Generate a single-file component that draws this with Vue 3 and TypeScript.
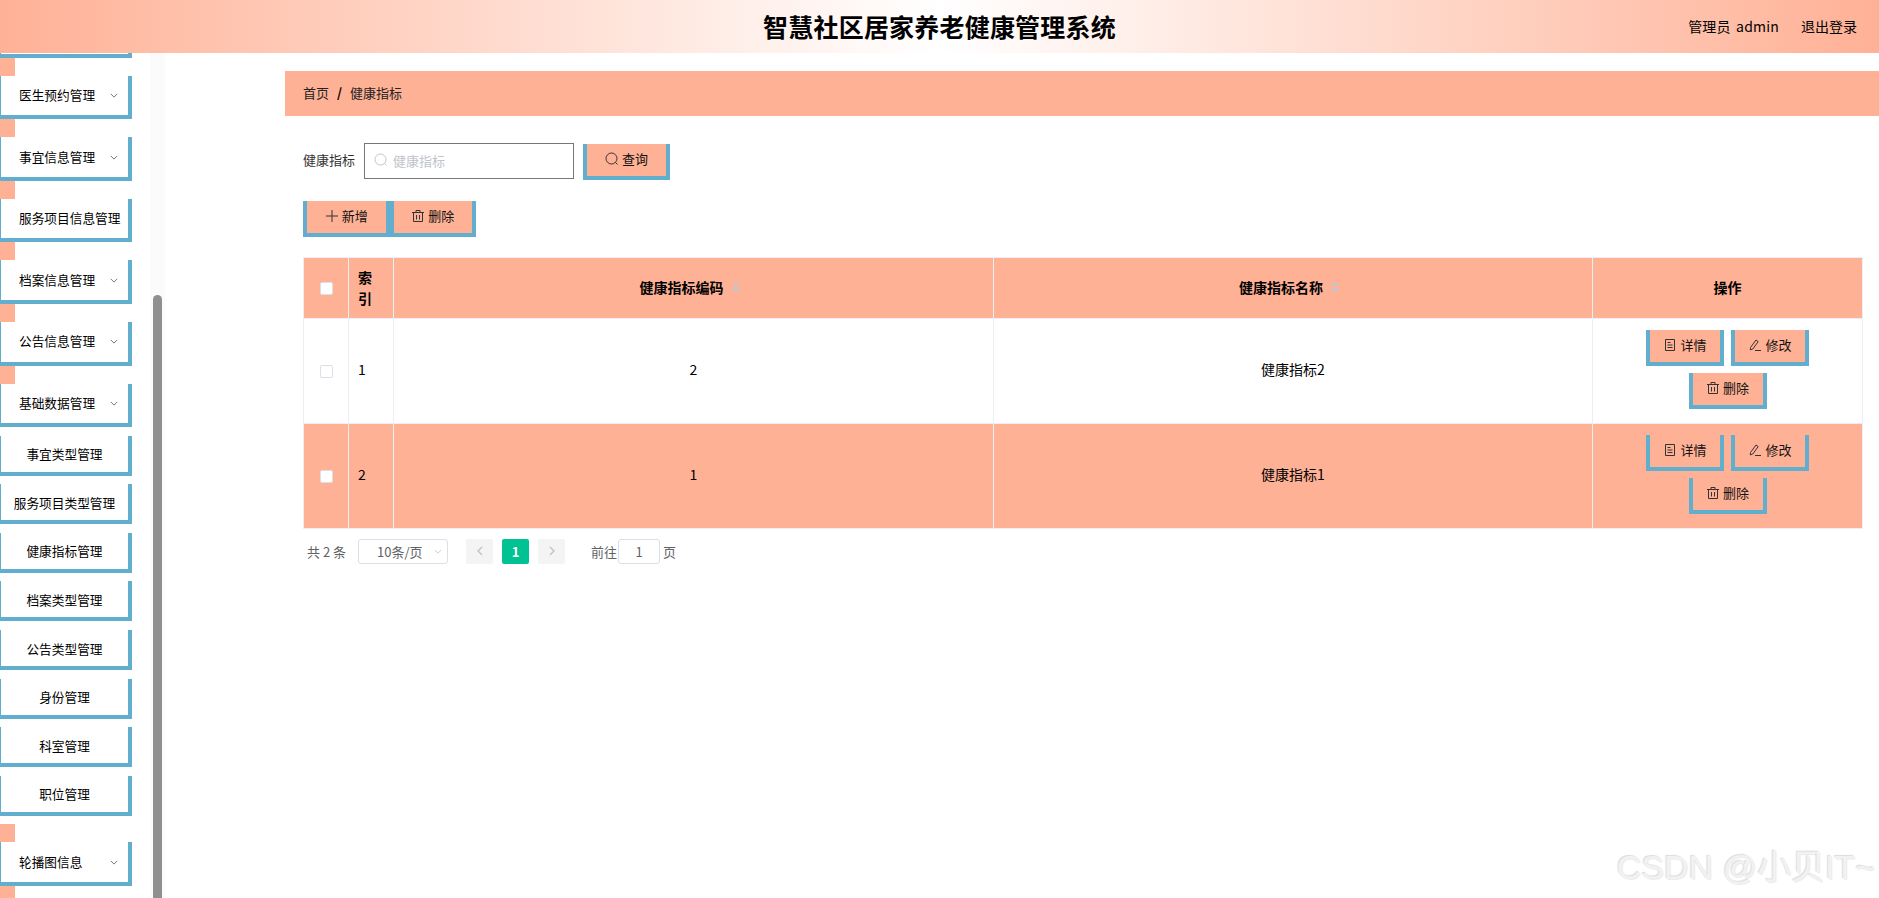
<script setup lang="ts">
interface MenuGroup {
  name: string
  arrow: boolean
  children?: string[]
}

interface Row {
  id: number
  code: string
  name: string
}

const menus: MenuGroup[] = [
  { name: '', arrow: false },
  { name: '医生预约管理', arrow: true },
  { name: '事宜信息管理', arrow: true },
  { name: '服务项目信息管理', arrow: false },
  { name: '档案信息管理', arrow: true },
  { name: '公告信息管理', arrow: true },
  {
    name: '基础数据管理',
    arrow: true,
    children: ['事宜类型管理', '服务项目类型管理', '健康指标管理', '档案类型管理', '公告类型管理', '身份管理', '科室管理', '职位管理'],
  },
  { name: '轮播图信息', arrow: true },
  { name: '', arrow: false },
]

const rows: Row[] = [
  { id: 1, code: '2', name: '健康指标2' },
  { id: 2, code: '1', name: '健康指标1' },
]
</script>

<template>
  <div class="page">
    <header class="topbar">
      <h1>智慧社区居家养老健康管理系统</h1>
      <div class="user">
        <span class="who">管理员 admin</span>
        <span>退出登录</span>
      </div>
    </header>

    <div class="body-wrap">
      <!-- 侧边栏 -->
      <aside class="sidebar">
        <nav class="menu">
          <div v-for="(m, i) in menus" :key="i" class="group" :class="{ open: m.children }">
            <i class="mark"></i>
            <div class="item">
              <span>{{ m.name }}</span>
              <svg v-if="m.arrow" class="arrow" viewBox="0 0 10 6"><path d="M1 1l4 4 4-4" /></svg>
            </div>
            <div v-for="c in m.children" :key="c" class="item sub">{{ c }}</div>
          </div>
        </nav>
        <div class="track"><div class="thumb"></div></div>
      </aside>

      <main class="content">
        <div class="crumb">
          <span>首页</span>
          <b>/</b>
          <span>健康指标</span>
        </div>

        <div class="inner">
          <div class="filter">
            <label>健康指标</label>
            <div class="search">
              <svg class="ico light" viewBox="0 0 14 14"><circle cx="6.5" cy="6.5" r="5.5" /><path d="M10.5 10.5l2 2" /></svg>
              <span>健康指标</span>
            </div>
            <button class="btn query">
              <svg class="ico" viewBox="0 0 14 14"><circle cx="6.5" cy="6.5" r="5.5" /><path d="M10.5 10.5l2 2" /></svg>
              查询
            </button>
          </div>

          <div class="actions">
            <button class="btn wide">
              <svg class="ico" viewBox="0 0 14 14"><path d="M7 1v12M1 7h12" /></svg>
              新增
            </button>
            <button class="btn wide">
              <svg class="ico" viewBox="0 0 14 14"><path d="M1 3.5h12M5 3.5V1.5h4v2M2.5 3.5v9h9v-9M5.5 6v4.5M8.5 6v4.5" /></svg>
              删除
            </button>
          </div>

          <table class="grid">
            <colgroup>
              <col style="width: 45px" />
              <col style="width: 45px" />
              <col style="width: 600px" />
              <col style="width: 599px" />
              <col style="width: 270px" />
            </colgroup>
            <thead>
              <tr>
                <th><i class="check"></i></th>
                <th class="left">索引</th>
                <th class="head"><span class="sortable">健康指标编码<i class="caret"></i></span></th>
                <th class="head"><span class="sortable">健康指标名称<i class="caret"></i></span></th>
                <th class="head">操作</th>
              </tr>
            </thead>
            <tbody>
              <tr v-for="r in rows" :key="r.id" :class="{ striped: r.id === 2 }">
                <td><i class="check"></i></td>
                <td class="left txt">{{ r.id }}</td>
                <td class="txt">{{ r.code }}</td>
                <td class="txt">{{ r.name }}</td>
                <td class="op-cell">
                  <div class="ops">
                    <button class="btn small">
                      <svg class="ico" viewBox="0 0 14 14"><path d="M2.5 1.5h9v11h-9zM4.5 4.5h3M4.5 7h5M4.5 9.5h5" /></svg>
                      详情
                    </button>
                    <button class="btn small">
                      <svg class="ico" viewBox="0 0 14 14"><path d="M2.5 9.5L8 2l2.2 1.6L4.8 11l-2.5.9zM7 12.5h6" /></svg>
                      修改
                    </button>
                    <button class="btn small">
                      <svg class="ico" viewBox="0 0 14 14"><path d="M1 3.5h12M5 3.5V1.5h4v2M2.5 3.5v9h9v-9M5.5 6v4.5M8.5 6v4.5" /></svg>
                      删除
                    </button>
                  </div>
                </td>
              </tr>
            </tbody>
          </table>

          <div class="pager">
            <span class="total">共 2 条</span>
            <div class="size">
              <span>10条/页</span>
              <svg viewBox="0 0 10 6"><path d="M1 1l4 4 4-4" /></svg>
            </div>
            <div class="pg nav"><svg viewBox="0 0 6 10"><path d="M5 1L1 5l4 4" /></svg></div>
            <div class="pg on">1</div>
            <div class="pg nav"><svg viewBox="0 0 6 10"><path d="M1 1l4 4-4 4" /></svg></div>
            <span class="goto">前往</span>
            <div class="jump">1</div>
            <span class="unit">页</span>
          </div>
        </div>
      </main>
    </div>

    <div class="watermark">CSDN @小贝IT~</div>
  </div>
</template>

<style>
html, body {
  margin: 0;
  overflow: hidden;
  background: #fff;
}
</style>

<style scoped>
.page {
  position: relative;
  height: 100vh;
  overflow: hidden;
  font-family: 'Noto Sans CJK SC', 'Noto Sans', sans-serif;
  font-size: 13px;
  color: #000;
}

.topbar {
  position: relative;
  height: 53px;
  display: flex;
  align-items: center;
  justify-content: center;
  background: linear-gradient(90deg, #ffb196 0%, #fff 50%, #ffb196 100%);
}

.topbar h1 {
  margin: 0;
  font-size: 25px;
  font-weight: 700;
  line-height: 53px;
  letter-spacing: 0.2px;
}

.user {
  position: absolute;
  right: 22px;
  top: 0;
  display: flex;
  gap: 22px;
  font-size: 14px;
  line-height: 53px;
}

.who {
  word-spacing: 2px;
  letter-spacing: 0.2px;
}

.body-wrap {
  display: flex;
  height: calc(100vh - 53px);
}

.sidebar {
  flex: 0 0 165px;
  display: flex;
  overflow: hidden;
}

.menu {
  flex: 0 0 132px;
  min-width: 0;
  margin-top: -56.75px;
  font-size: 12.7px;
}

.group.open {
  padding-bottom: 8.6px;
}

.mark {
  display: block;
  width: 15px;
  height: 18px;
  background: #ffb196;
}

.item {
  box-sizing: border-box;
  height: 43.55px;
  display: flex;
  align-items: center;
  justify-content: space-between;
  padding: 0 10px 2px 18px;
  border-left: 1px solid #61aecf;
  border-right: 4px solid #61aecf;
  border-bottom: 4px solid #61aecf;
  white-space: nowrap;
}

.item.sub {
  height: 40px;
  margin-top: 8.6px;
  padding: 0;
  justify-content: center;
}

.arrow {
  width: 8px;
  height: 5px;
  margin-top: 2px;
  fill: none;
  stroke: #555;
  stroke-width: 1;
}

.track {
  width: 15px;
  margin-left: 18px;
  padding: 242px 3px 0;
  box-sizing: border-box;
  background: #fbfbfb;
}

.thumb {
  height: 100%;
  background: #8f8f8f;
  border-radius: 5px 5px 0 0;
}

.content {
  flex: 1;
  padding: 18px 0 0 120px;
  min-width: 0;
}

.crumb {
  height: 45px;
  display: flex;
  align-items: center;
  gap: 8px;
  padding: 0 0 2px 18px;
  box-sizing: border-box;
  background: #ffb196;
  color: #222;
}

.crumb b {
  color: #000;
}

.inner {
  padding: 27px 16px 0 18px;
}

.filter {
  display: flex;
  align-items: flex-start;
  height: 37px;
}

.filter label {
  width: 52px;
  margin-right: 9px;
  color: #333;
  line-height: 34px;
}

.search {
  box-sizing: border-box;
  width: 210px;
  height: 36px;
  display: flex;
  align-items: center;
  gap: 5px;
  padding: 0 0 2px 9px;
  border: 1px solid #777;
  color: #c0c4cc;
}

.ico {
  width: 14px;
  height: 14px;
  flex: none;
  fill: none;
  stroke: #333;
  stroke-width: 1;
}

.btn .ico {
  margin-top: 1px;
}

.ico.light {
  stroke: #c0c4cc;
}

.btn {
  box-sizing: border-box;
  display: inline-flex;
  align-items: center;
  justify-content: center;
  gap: 3px;
  height: 36px;
  padding: 0 0 3px;
  background: #ffb196;
  border: 0 solid #61aecf;
  border-width: 0 4px 4px;
  font: inherit;
  color: #111;
}

.query {
  width: 87px;
  margin: 1px 0 0 9px;
}

.actions {
  display: flex;
  margin-top: 21px;
}

.wide {
  width: 86.5px;
}

.grid {
  width: 1559px;
  margin-top: 20px;
  border-collapse: collapse;
  table-layout: fixed;
}

.grid th,
.grid td {
  border: 1px solid #ebeef5;
  padding: 0 9px;
  text-align: center;
  box-sizing: border-box;
}

.grid th {
  height: 61px;
  background: #ffb196;
  font-size: 14px;
  font-weight: 700;
  line-height: 21px;
}

.grid td {
  height: 105px;
}

.grid .head {
  padding-bottom: 2px;
}

.grid .left {
  text-align: left;
}

.grid .txt {
  font-size: 14px;
  padding-bottom: 5px;
}

.grid .op-cell {
  padding-bottom: 3px;
}

.striped td {
  background: #ffb196;
}

.check {
  display: block;
  box-sizing: border-box;
  width: 13px;
  height: 13px;
  margin: 0 auto;
  background: #fff;
  border: 1px solid #dcdfe6;
  border-radius: 2px;
}

.sortable {
  display: inline-flex;
  align-items: center;
}

.caret {
  width: 24px;
  display: flex;
  flex-direction: column;
  align-items: center;
  gap: 2px;
}

.caret::before,
.caret::after {
  content: '';
  width: 0;
  height: 0;
  border-left: 4px solid transparent;
  border-right: 4px solid transparent;
}

.caret::before {
  border-bottom: 4px solid #c0c4cc;
}

.caret::after {
  border-top: 4px solid #c0c4cc;
}

.ops {
  display: flex;
  flex-wrap: wrap;
  justify-content: center;
  gap: 7px;
  width: 170px;
  margin: 0 auto;
}

.small {
  width: 78px;
}

.pager {
  display: flex;
  align-items: center;
  height: 26px;
  margin-top: 9px;
  color: #606266;
  font-size: 13px;
}

.total {
  width: 55px;
  padding-left: 4px;
  box-sizing: border-box;
}

.size {
  box-sizing: border-box;
  width: 90px;
  height: 25px;
  display: flex;
  align-items: center;
  justify-content: space-between;
  padding: 0 5px 0 18px;
  border: 1px solid #dcdfe6;
  border-radius: 3px;
  margin-right: 18px;
}

.size svg {
  width: 8px;
  height: 5px;
  fill: none;
  stroke: #c0c4cc;
}

.pg {
  width: 27px;
  height: 25px;
  display: flex;
  align-items: center;
  justify-content: center;
  margin-right: 9px;
  border-radius: 2px;
}

.pg.nav {
  background: #f4f4f5;
}

.pg.nav svg {
  width: 6px;
  height: 10px;
  fill: none;
  stroke: #c0c4cc;
  stroke-width: 1.5;
}

.pg.on {
  background: #00c292;
  color: #fff;
  font-weight: 700;
}

.goto {
  margin-left: 17px;
  width: 27px;
}

.jump {
  box-sizing: border-box;
  width: 42px;
  height: 25px;
  margin-top: 1px;
  display: flex;
  align-items: center;
  justify-content: center;
  border: 1px solid #dcdfe6;
  border-radius: 3px;
}

.unit {
  margin-left: 3px;
}

.watermark {
  position: absolute;
  right: 4px;
  bottom: 12px;
  font-family: 'Liberation Sans', 'Noto Sans CJK SC', sans-serif;
  font-size: 34px;
  line-height: 38px;
  white-space: nowrap;
  color: #f2f2f2;
  text-shadow: -1px -1px 1px rgba(0, 0, 0, 0.14), 1px 1px 1px rgba(0, 0, 0, 0.08);
}
</style>
